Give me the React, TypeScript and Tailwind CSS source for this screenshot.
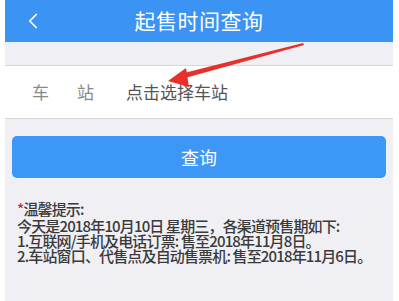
import { ChevronLeft } from 'lucide-react';

const font = { fontFamily: '"Noto Sans CJK SC", "Noto Sans", sans-serif' };

export default function App() {
  return (
    <div className="relative w-[399px] h-[301px] bg-white pl-[5px] pr-[6px] overflow-hidden" style={font}>
      <div className="flex flex-col h-full bg-[#efeff4]">
        {/* Header */}
        <div className="relative h-[43px] bg-[#3b93f4] flex items-center justify-center border-b border-[#e6f0fb]">
          <ChevronLeft size={26} strokeWidth={1.6} className="absolute left-[15px] top-[8px] text-white" />
          <span className="text-white text-[21px] tracking-[0.5px]">起售时间查询</span>
        </div>

        {/* Station row */}
        <div className="mt-[22px] h-[54px] bg-white border-y border-[#d8d8d8] flex items-center text-[17px]">
          <span className="ml-[27px] text-[#8a8a8a]">车</span>
          <span className="ml-[28px] text-[#8a8a8a]">站</span>
          <span className="ml-[32px] text-[#555]">点击选择车站</span>
        </div>

        {/* Button */}
        <button className="mx-[7px] mt-[17px] h-[42px] rounded-[5px] bg-[#3d97f6] text-white text-[18px] flex items-center justify-center">
          查询
        </button>

        {/* Notice */}
        <div className="mt-[23px] pl-[12px] text-[15px] leading-[15px] text-[#3a3a3a] font-medium tracking-[-0.85px]">
          <div className="mb-[2px]"><span className="text-[#c0304a]">*</span>温馨提示:</div>
          <div>今天是2018年10月10日 星期三，各渠道预售期如下:</div>
          <div>1.互联网/手机及电话订票: 售至2018年11月8日。</div>
          <div>2.车站窗口、代售点及自动售票机: 售至2018年11月6日。</div>
        </div>
      </div>

      {/* Red annotation arrow */}
      <svg className="absolute left-0 top-0 pointer-events-none" width="399" height="301" viewBox="0 0 399 301">
        <polygon points="303,43 304,45 185,78 184,73" fill="#e8302a" />
        <polygon points="168,81 186,68 189,87" fill="#e8302a" />
      </svg>
    </div>
  );
}
